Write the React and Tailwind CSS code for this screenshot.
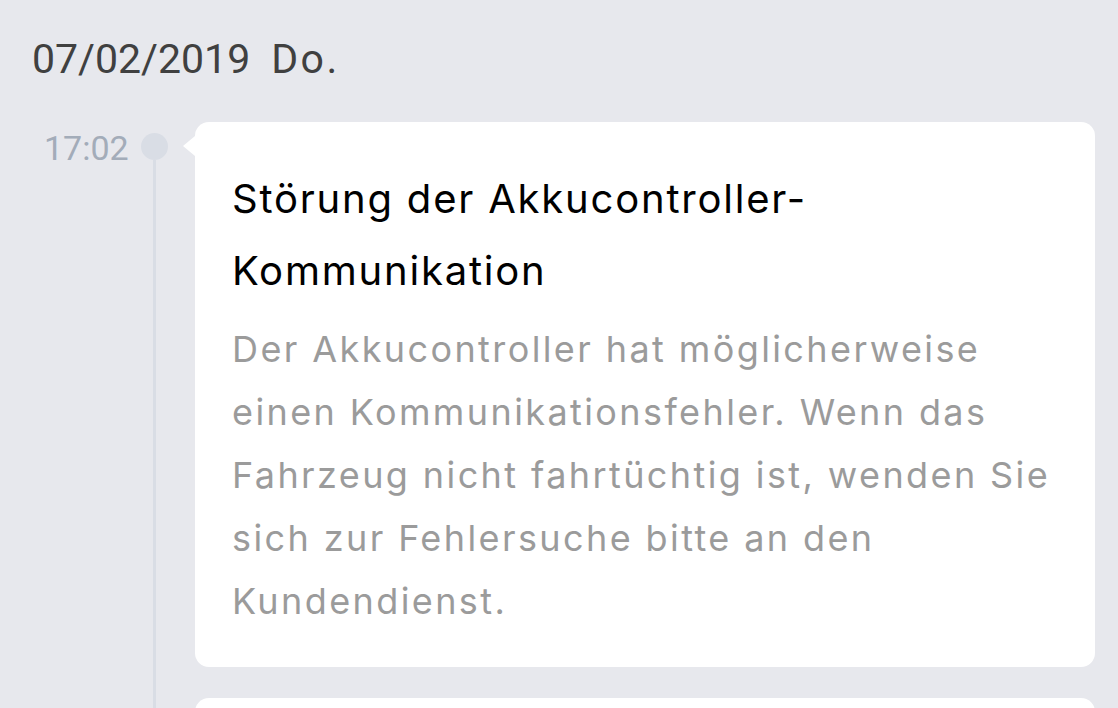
export default function App() {
  return (
    <div className="w-[1118px] h-[708px] overflow-hidden bg-[#e7e8ed]" style={{ fontFamily: "Inter, 'Liberation Sans', sans-serif" }}>
      <div className="pl-[32px] pt-[34px] text-[41px] leading-[50px] text-[#404040] flex" style={{ fontFamily: "Roboto, sans-serif" }}>
        <span>07/02/2019</span>
        <span className="ml-[21px] tracking-[2.5px]">Do.</span>
      </div>
      <div className="flex mt-[38px]">
        <div className="w-[195px] shrink-0 flex">
          <div className="w-[140px] pl-[44px] pt-[6px] text-[34px] leading-[40px] text-[#a3acb9]" style={{ fontFamily: "Roboto, sans-serif" }}>17:02</div>
          <div className="flex flex-col items-center w-[28px] pt-[11px]">
            <div className="w-[27px] h-[27px] rounded-full bg-[#d9dde5]"></div>
            <div className="w-[3px] flex-1 bg-[#d9dde5]"></div>
          </div>
        </div>
        <div className="flex flex-col gap-[31px] w-[900px]">
          <div className="relative bg-white rounded-[14px] pl-[37px] pr-[30px] pt-[41px] pb-[34px]">
            <div className="absolute left-[-12px] top-[14px] w-0 h-0 border-y-[10px] border-y-transparent border-r-[12px] border-r-white"></div>
            <div className="text-[40px] leading-[72px] text-black tracking-[1.8px]">
              Störung der Akkucontroller-<br />Kommunikation
            </div>
            <div className="text-[36px] leading-[63px] text-[#9b9b9b] mt-[11px] tracking-[2.4px]">
              Der Akkucontroller hat möglicherweise einen Kommunikationsfehler. Wenn das Fahrzeug nicht fahrtüchtig ist, wenden Sie sich zur Fehlersuche bitte an den Kundendienst.
            </div>
          </div>
          <div className="bg-white rounded-[14px] h-[100px]"></div>
        </div>
      </div>
    </div>
  );
}
